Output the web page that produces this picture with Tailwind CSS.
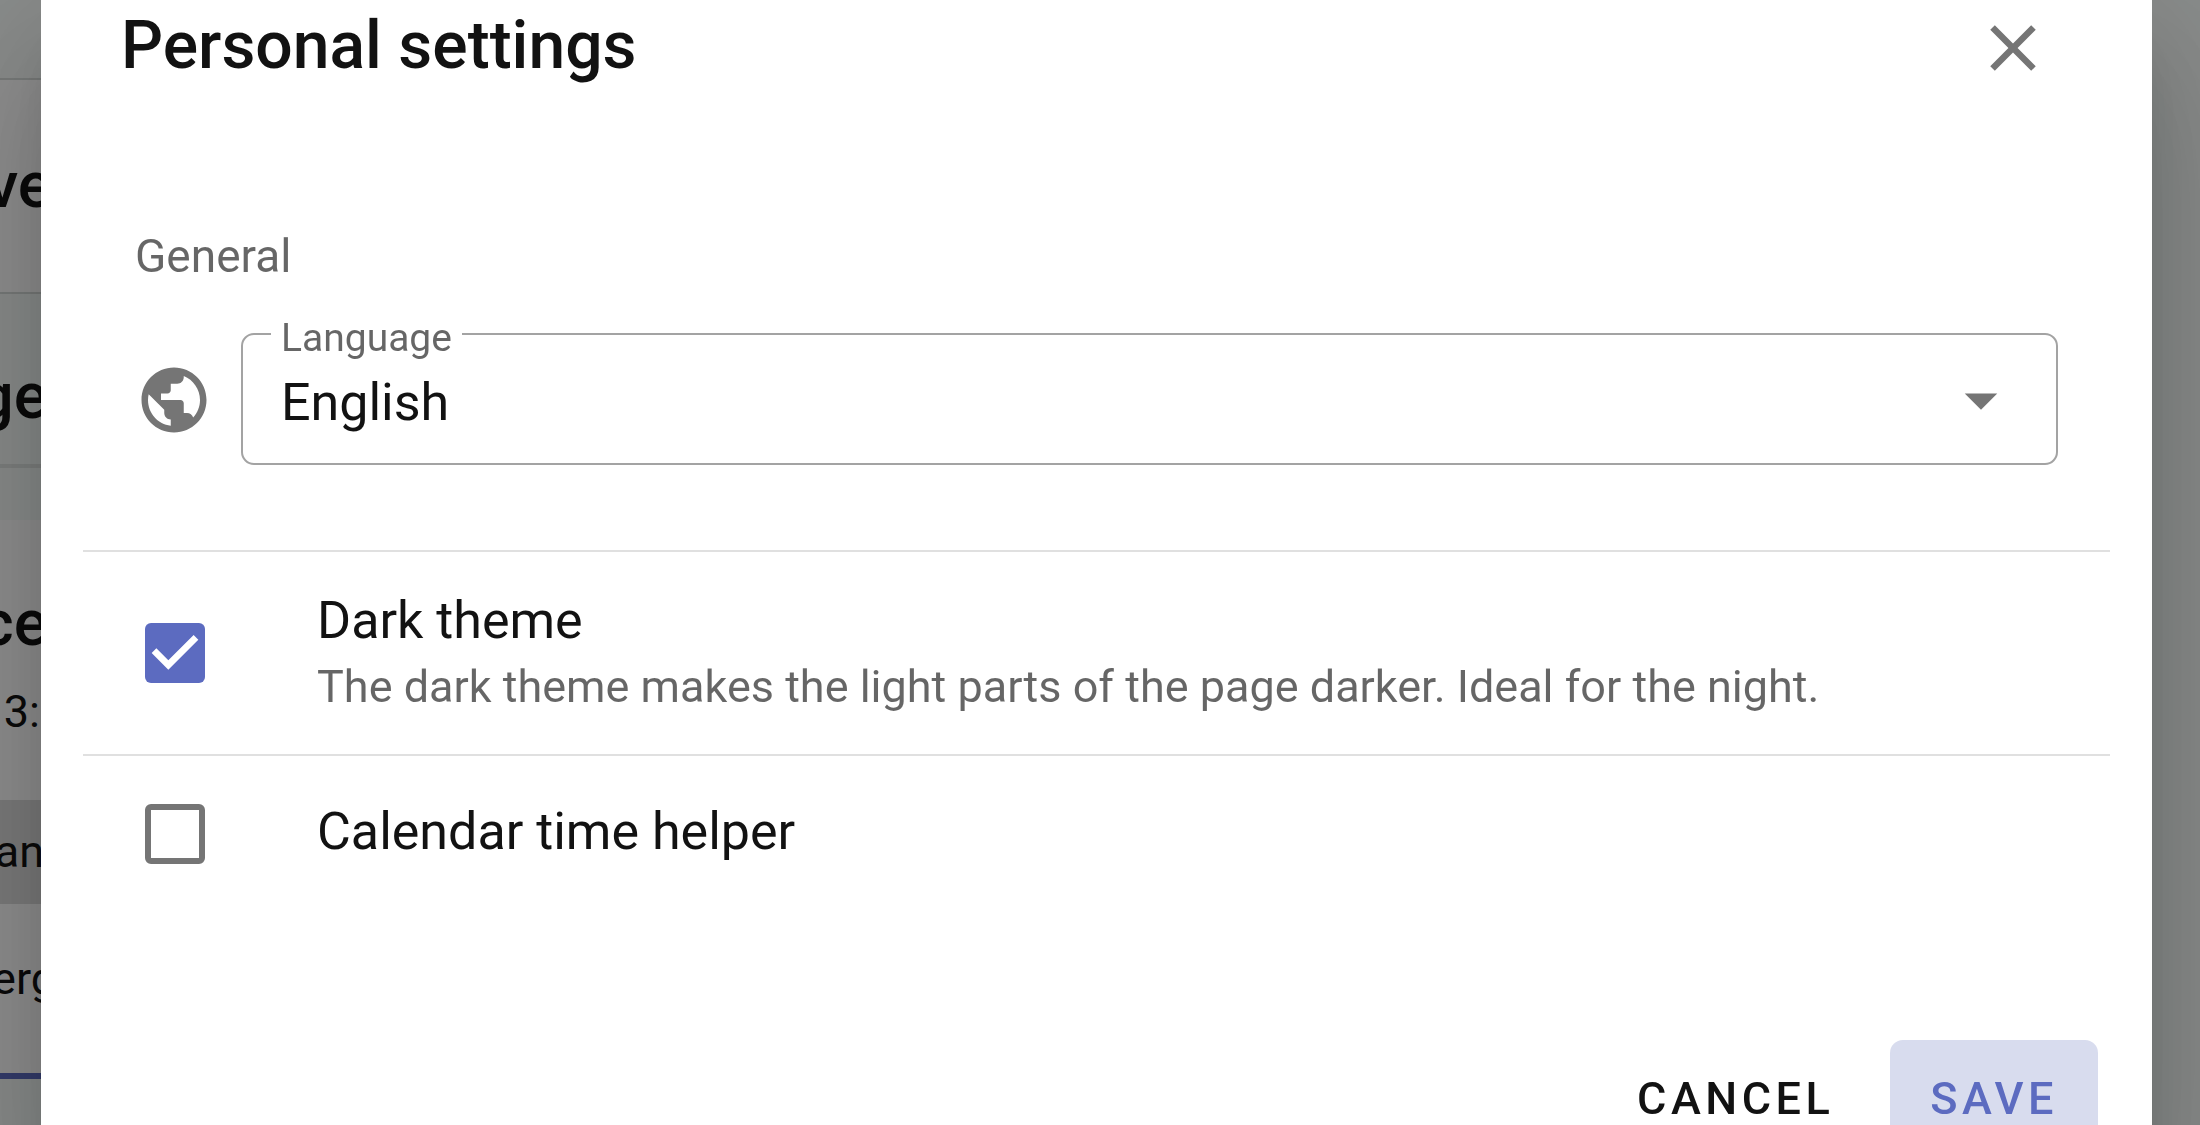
<!DOCTYPE html>
<html lang="en">
<head>
    <meta charset="UTF-8">
    <meta name="viewport" content="width=device-width, initial-scale=1.0">
    <title>Personal settings</title>
    <script src="https://cdn.jsdelivr.net/npm/@tailwindcss/browser@4"></script>
</head>
<body class="h-screen overflow-hidden bg-[#f5faf8] font-['Roboto',sans-serif] text-[#121212]">
    <!-- Page behind the dialog -->
    <main class="flex w-14 flex-col whitespace-nowrap" aria-hidden="true">
        <div class="h-20 border-b-2 border-[#d5dad8]"></div>
        <div class="flex h-[214px] items-center justify-end border-b-2 border-[#d5dad8] bg-white pr-1 text-[64px] font-medium">ve</div>
        <div class="flex h-[174px] items-center justify-end border-b-4 border-[#dfe4e2] pt-9 pr-2 text-[64px] font-medium">ge</div>
        <div class="h-[52px]"></div>
        <div class="flex h-[280px] flex-col items-end bg-white pt-16">
            <div class="pr-2 text-[64px] leading-20 font-medium">ce</div>
            <div class="pr-4 text-[45px] leading-24">3:</div>
        </div>
        <div class="flex h-[104px] items-center justify-end bg-[#dcdcdc] pr-3 text-[45px]">an</div>
        <div class="flex h-[175px] items-center justify-end border-b-6 border-[#5c6bc0] bg-white pb-5 text-[45px]">erg</div>
    </main>

    <!-- Settings dialog -->
    <div class="fixed inset-0 overflow-hidden bg-black/44 pr-12 pl-[41px]">
        <form class="bg-white pb-8 shadow-[0_36px_49px_-23px_rgba(0,0,0,0.2),0_78px_123px_10px_rgba(0,0,0,0.14),0_29px_149px_26px_rgba(0,0,0,0.12)]" role="dialog" aria-labelledby="dialog-title">
            <header class="flex h-24 items-center justify-between pr-[100px] pl-20">
                <h1 id="dialog-title" class="pb-1 text-[66px] leading-none font-medium">Personal settings</h1>
                <button type="button" aria-label="Close" class="text-[#757575]">
                    <svg class="size-[78px]" viewBox="0 0 24 24" fill="currentColor"><path d="M19 6.41L17.59 5 12 10.59 6.41 5 5 6.41 10.59 12 5 17.59 6.41 19 12 13.41 17.59 19 19 17.59 13.41 12z"/></svg>
                </button>
            </header>

            <section class="mt-[130px] px-[94px]">
                <h2 class="text-[46px] leading-[60px] text-black/60">General</h2>
                <div class="mt-6 flex items-end gap-7">
                    <svg class="mb-[26px] size-[78px] shrink-0 text-[#757575]" viewBox="0 0 24 24" fill="currentColor"><path d="M12 2C6.48 2 2 6.48 2 12s4.48 10 10 10 10-4.48 10-10S17.52 2 12 2zm-1 17.93c-3.95-.49-7-3.85-7-7.93 0-.62.08-1.21.21-1.79L9 15v1c0 1.1.9 2 2 2v1.93zm6.9-2.54c-.26-.81-1-1.39-1.9-1.39h-1v-3c0-.55-.45-1-1-1H8v-2h2c.55 0 1-.45 1-1V7h2c1.1 0 2-.9 2-2v-.41c2.93 1.19 5 4.06 5 7.41 0 2.08-.8 3.97-2.1 5.39z"/></svg>
                    <fieldset class="relative grow rounded-[13px] border-2 border-[#a3a3a3]">
                        <legend class="ml-7 h-12 px-[10px] text-[39px] leading-14 text-black/60"><label for="language">Language</label></legend>
                        <select id="language" class="block h-[105px] w-full appearance-none bg-transparent px-[38px] pb-4 text-[52px] outline-none">
                            <option>English</option>
                        </select>
                        <svg class="pointer-events-none absolute right-9 bottom-6 size-[78px] text-[#757575]" viewBox="0 0 24 24" fill="currentColor"><path d="M7 10l5 5 5-5z"/></svg>
                    </fieldset>
                </div>
            </section>

            <ul class="mx-[42px] mt-[85px]">
                <li class="border-t-2 border-[#e0e0e0]">
                    <label class="flex h-[202px] items-center gap-28 pl-[62px]">
                        <span class="grid shrink-0 place-items-center">
                            <input type="checkbox" checked class="col-start-1 row-start-1 size-15 appearance-none rounded-md bg-[#5c6bc0]">
                            <svg class="pointer-events-none col-start-1 row-start-1 size-15 text-white" viewBox="3 3 18 18" fill="currentColor"><path d="M10 17l-5-5 1.41-1.41L10 14.17l7.59-7.59L19 8z"/></svg>
                        </span>
                        <span>
                            <span class="block text-[52px] leading-17">Dark theme</span>
                            <span class="block text-[45px] leading-16 text-black/60">The dark theme makes the light parts of the page darker. Ideal for the night.</span>
                        </span>
                    </label>
                </li>
                <li class="border-t-2 border-[#e0e0e0]">
                    <label class="flex h-[156px] items-center gap-28 pl-[62px]">
                        <input type="checkbox" class="size-15 shrink-0 appearance-none rounded-md border-6 border-[#757575]">
                        <span class="pb-1 text-[52px] leading-17">Calendar time helper</span>
                    </label>
                </li>
            </ul>

            <footer class="mt-32 flex justify-end gap-4 pr-[54px]">
                <button type="button" class="h-[118px] rounded-[13px] px-10 text-[45px] font-medium tracking-widest uppercase">Cancel</button>
                <button type="submit" class="h-[118px] rounded-[13px] bg-[#d8dcee] px-10 text-[45px] font-medium tracking-widest text-[#5c6bc0] uppercase">Save</button>
            </footer>
        </form>
    </div>
</body>
</html>
